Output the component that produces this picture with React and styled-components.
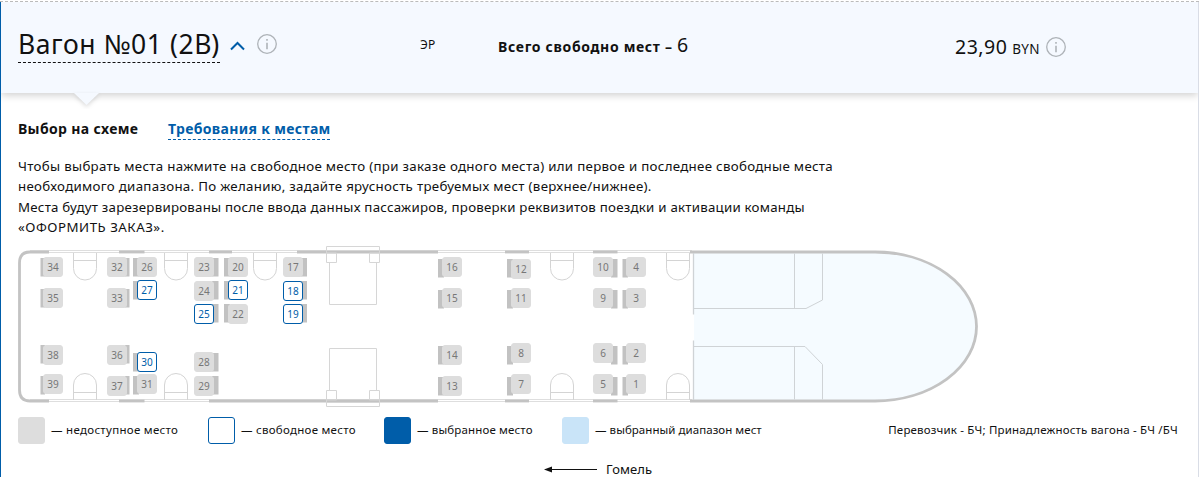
import React from 'react';
import styled, { createGlobalStyle } from 'styled-components';

const GlobalStyle = createGlobalStyle`
  *, *::before, *::after { box-sizing: border-box; }
  body { margin: 0; background: #fff; }
`;

const BLUE = '#005da9';
const INK = '#111';

const Page = styled.main`
  width: 1199px;
  height: 477px;
  overflow: hidden;
  padding-top: 1px;
  background: #fff;
  color: ${INK};
  font-family: 'Noto Sans', 'Open Sans', sans-serif;
  white-space: nowrap;
`;

const Panel = styled.section`
  height: 476px;
  border-top: 1px dashed #bbb;
  display: flex;
`;

const Content = styled.div`
  flex: 1;
  border-left: 1px solid ${BLUE};
  border-right: 1px solid #d9dde6;
`;

const Header = styled.header`
  position: relative;
  display: flex;
  height: 91px;
  padding-left: 17px;
  background: #f5f9ff;
  box-shadow: 0 2px 8px rgba(0, 0, 0, 0.2);
  clip-path: inset(0 0 -16px 0);
`;

const Pointer = styled.svg`
  position: absolute;
  left: 70px;
  top: 91px;
  filter: drop-shadow(0 2px 2px rgba(0, 0, 0, 0.14));
`;

const Cell = styled.div`
  display: flex;
  align-items: flex-start;
  width: ${(p) => p.$width}px;
  padding-top: ${(p) => p.$top}px;
`;

const Title = styled.h1`
  width: 202px;
  height: 36px;
  margin: 1px 10px 0 0;
  border-bottom: 1px dashed ${INK};
  font-size: 26.5px;
  font-weight: 400;
  line-height: 34px;
  letter-spacing: 0.55px;
`;

const Chevron = styled.svg`
  margin: 15px 12px 0 0;
`;

const InfoSvg = styled.svg`
  flex: none;
  margin: ${(p) => p.$top}px 0 0 ${(p) => p.$left || 0}px;
`;

const CarType = styled.span`
  font-size: 12px;
  line-height: 16px;
  letter-spacing: 0.3px;
`;

const Total = styled.div`
  font-size: 14px;
  font-weight: 700;
  line-height: 26px;
  letter-spacing: 0.67px;
`;

const BigNumber = styled.span`
  font-size: 19.5px;
  font-weight: 400;
  letter-spacing: 0.5px;
`;

const Price = styled.div`
  width: 84px;
  line-height: 26px;
`;

const Currency = styled.span`
  margin-left: 5px;
  font-size: 13.5px;
  letter-spacing: 0.2px;
`;

const Body = styled.div`
  padding: 0 20px 0 17px;
`;

const Tabs = styled.nav`
  display: flex;
  height: 63px;
  padding-top: 26px;
  font-size: 14px;
  font-weight: 700;
  line-height: 20px;
  letter-spacing: 0.34px;
`;

const Tab = styled.span`
  width: ${(p) => p.$width}px;
  height: 21px;
  margin-right: 29px;
  color: ${(p) => (p.$link ? BLUE : INK)};
  border-bottom: ${(p) => (p.$link ? `1px dashed ${BLUE}` : '0')};
`;

const Hint = styled.p`
  margin: 0;
  height: 88px;
  font-size: 13.3px;
  line-height: 20.3px;
`;

const HintLine = styled.span`
  display: block;
  letter-spacing: ${(p) => p.$tracking}px;
`;

const CarMap = styled.div`
  position: relative;
  width: 962px;
  height: 166px;
`;

const CarDrawing = styled.svg`
  display: block;
`;

const SeatBox = styled.span`
  position: absolute;
  left: ${(p) => p.$x}px;
  top: ${(p) => p.$y}px;
  display: flex;
  align-items: center;
  justify-content: center;
  width: 20px;
  height: 20px;
  border: 1px solid ${(p) => (p.$free ? BLUE : '#ddd')};
  border-radius: 3px;
  background: ${(p) => (p.$free ? '#fff' : '#ddd')};
  color: ${(p) => (p.$free ? BLUE : '#777')};
  font-size: 10px;
  line-height: 18px;
`;

const Legend = styled.div`
  display: flex;
  align-items: center;
  height: 27px;
  margin-top: 7px;
  font-size: 11.5px;
`;

const LegendItem = styled.div`
  display: flex;
  align-items: flex-start;
  width: ${(p) => p.$width}px;
  line-height: 25px;
  letter-spacing: ${(p) => p.$tracking}px;
`;

const Swatch = styled.span`
  width: 27px;
  height: 27px;
  margin-right: 6px;
  border: 1px solid ${(p) => p.$border};
  border-radius: 3px;
  background: ${(p) => p.$fill};
`;

const Carrier = styled.span`
  align-self: flex-start;
  margin-left: auto;
  line-height: 25px;
  letter-spacing: 0.18px;
`;

const Direction = styled.div`
  display: flex;
  align-items: center;
  gap: 9px;
  margin-top: 15px;
  padding-left: 526px;
  font-size: 13px;
  line-height: 20px;
  letter-spacing: 0.1px;
`;

const FREE = new Set([18, 19, 21, 25, 27, 30]);

/* number, box left, box top, side of the backrest, backrest top, backrest depth */
const SEATS = [
  [34, 43, 257, 'l', 258, 2.5], [35, 43, 288, 'l', 289, 2.5], [38, 43, 345, 'l', 345, 2.5], [39, 43, 374, 'l', 376, 2.5],
  [32, 107, 257, 'r', 258, 2.5], [33, 107, 288, 'r', 289, 2.5], [36, 107, 345, 'r', 345, 2.5], [37, 107, 376, 'r', 376, 2.5],
  [26, 137, 257, 'l', 258, 4], [27, 137, 280, 'l', 281, 4], [30, 137, 352, 'l', 353, 4], [31, 137, 374, 'l', 376, 4],
  [23, 194, 257, 'r', 258, 4.5], [24, 194, 281, 'r', 281, 4.5], [25, 194, 304, 'r', 304, 4.5],
  [28, 194, 352, 'r', 353, 4.5], [29, 194, 376, 'r', 376, 4.5],
  [20, 228, 257, 'l', 258, 4], [21, 228, 280, 'l', 281, 4], [22, 228, 304, 'l', 304, 4],
  [17, 283, 257, 'r', 258, 4], [18, 283, 281, 'r', 281, 4], [19, 283, 304, 'r', 304, 4],
  [16, 442, 257, 'l', 259, 4], [15, 442, 288, 'l', 290, 4], [14, 442, 345, 'l', 346, 4], [13, 442, 376, 'l', 377, 4],
  [12, 511, 259, 'l', 259, 4], [11, 511, 288, 'l', 290, 4], [8, 511, 343, 'l', 346, 4], [7, 511, 374, 'l', 377, 4],
  [10, 593, 257, 'r', 259, 4.5], [9, 593, 288, 'r', 290, 4.5], [6, 593, 343, 'r', 346, 4.5], [5, 593, 374, 'r', 377, 4.5],
  [4, 626, 257, 'l', 259, 3.5], [3, 626, 288, 'l', 290, 3.5], [2, 626, 343, 'l', 346, 3.5], [1, 626, 374, 'l', 377, 3.5],
];

const WALLS = [[119, 144.5], [505, 529], [593, 617.5]];
const WALLS_TOP = [...WALLS, [209, 232], [297, 438]];
const WALLS_BOTTOM = [...WALLS, [209, 438]];
const TABLES_TOP = [73.5, 164.5, 253.5, 550.5, 666.5];
const TABLES_BOTTOM = [73.5, 164.5, 550.5, 666.5];

function InfoIcon({ top, left }) {
  return (
    <InfoSvg $top={top} $left={left} width="20" height="20" viewBox="0 0 20 20" fill="none" stroke="#aeb3b8">
      <circle cx="10" cy="10" r="9.3" strokeWidth="1.3" />
      <path d="M10 8.8v6.4M10 5v1.8" strokeWidth="1.6" />
    </InfoSvg>
  );
}

function Vestibule({ flip }) {
  return (
    <g transform={flip ? 'translate(0 653) scale(1 -1)' : undefined} stroke="#d6d6d6" fill="none">
      <path d="M326.5 262.5V246.5H379.5V262.5M326.5 250.5H379.5" />
      <path d="M326.5 253H336.5V262.5H326.5M379.5 253H369.5V262.5H379.5" />
      <path d="M329.5 262.5V304.5H376.5V262.5" />
    </g>
  );
}

function Car() {
  return (
    <CarMap>
      <CarDrawing width="962" height="166" viewBox="18 244 962 166" fill="none">
        <path d="M694 252H875A101.5 74.5 0 0 1 875 401H694Z" fill="#f5fbff" />
        <g stroke="#dedede">
          <path d="M30 250.5H692M30 252.5H692M30 399.5H692M30 401.5H692" />
        </g>
        <g stroke="#d4d4d4">
          {TABLES_TOP.map((x) => (
            <path key={x} d={`M${x} 253V268.5a11.5 11.5 0 0 0 23 0V253M${x} 260.5h23`} />
          ))}
          {TABLES_BOTTOM.map((x) => (
            <path key={x} d={`M${x} 400V385a11.5 11.5 0 0 1 23 0V400M${x} 392.5h23`} />
          ))}
        </g>
        <g stroke="#c3c3c3" strokeWidth="2.8">
          <path d="M49 252H30Q19.5 252 19.5 263V390Q19.5 401 30 401H49" />
          {WALLS_TOP.map(([a, b]) => <path key={a} d={`M${a} 252H${b}`} />)}
          {WALLS_BOTTOM.map(([a, b]) => <path key={a} d={`M${a} 401H${b}`} />)}
          <path d="M690 252H875A101.5 74.5 0 0 1 875 401H690" />
        </g>
        <Vestibule />
        <Vestibule flip />
        <g stroke="#cfd3d6">
          <path d="M693.5 253V314.5M693.5 340.5V400" strokeWidth="1.3" />
          <path d="M694 308.5H806L822.5 300V253.5M794.5 253.5V308.5" />
          <path d="M694 346.5H805L822.5 364.5V399.5M794.5 346.5V399.5" />
        </g>
        {SEATS.map(([n, x, , side, top, depth]) => (
          <rect
            key={n}
            x={side === 'l' ? x - depth : x + 18}
            y={top}
            width={depth + 2}
            height="18.5"
            fill="#c2c2c2"
          />
        ))}
      </CarDrawing>
      {SEATS.map(([n, x, y]) => (
        <SeatBox key={n} $x={x - 18} $y={y - 244} $free={FREE.has(n)}>{n}</SeatBox>
      ))}
    </CarMap>
  );
}

export default function App() {
  return (
    <Page>
      <GlobalStyle />
      <Panel>
        <Content>
          <Header>
            <Cell $width={402} $top={24}>
              <Title>Вагон №01 (2В)</Title>
              <Chevron width="15" height="10" viewBox="0 0 15 10" fill="none" stroke={BLUE} strokeWidth="2">
                <path d="M1 8.5L7.5 2L14 8.5" />
              </Chevron>
              <InfoIcon top={8} />
            </Cell>
            <Cell $width={78} $top={35}>
              <CarType>ЭР</CarType>
            </Cell>
            <Cell $width={457} $top={30}>
              <Total>Всего свободно мест – <BigNumber>6</BigNumber></Total>
            </Cell>
            <Cell $width={240} $top={32}>
              <Price>
                <BigNumber>23,90</BigNumber>
                <Currency>BYN</Currency>
              </Price>
              <InfoIcon top={3} left={7} />
            </Cell>
            <Pointer width="30" height="14" viewBox="0 0 30 14">
              <path d="M3 0H28L15.5 12Z" fill="#f5f9ff" />
            </Pointer>
          </Header>
          <Body>
            <Tabs>
              <Tab $width={121}>Выбор на схеме</Tab>
              <Tab $width={162} $link>Требования к местам</Tab>
            </Tabs>
            <Hint>
              <HintLine $tracking={0.3}>Чтобы выбрать места нажмите на свободное место (при заказе одного места) или первое и последнее свободные места</HintLine>
              <HintLine $tracking={0.3}>необходимого диапазона. По желанию, задайте ярусность требуемых мест (верхнее/нижнее).</HintLine>
              <HintLine $tracking={0.23}>Места будут зарезервированы после ввода данных пассажиров, проверки реквизитов поездки и активации команды</HintLine>
              <HintLine $tracking={0.52}>«ОФОРМИТЬ ЗАКАЗ».</HintLine>
            </Hint>
            <Car />
            <Legend>
              <LegendItem $width={190} $tracking={0.3}><Swatch $fill="#ddd" $border="#ddd" />— недоступное место</LegendItem>
              <LegendItem $width={176} $tracking={0.27}><Swatch $fill="#fff" $border={BLUE} />— свободное место</LegendItem>
              <LegendItem $width={178} $tracking={0.15}><Swatch $fill={BLUE} $border={BLUE} />— выбранное место</LegendItem>
              <LegendItem $width={220} $tracking={0.05}><Swatch $fill="#c9e4f8" $border="#c9e4f8" />— выбранный диапазон мест</LegendItem>
              <Carrier>Перевозчик - БЧ; Принадлежность вагона - БЧ /БЧ</Carrier>
            </Legend>
            <Direction>
              <svg width="53" height="8" viewBox="0 0 53 8">
                <path d="M7 4.5H53" stroke={INK} />
                <path d="M0 4.5L8 1.5V7.5Z" fill={INK} />
              </svg>
              Гомель
            </Direction>
          </Body>
        </Content>
      </Panel>
    </Page>
  );
}
